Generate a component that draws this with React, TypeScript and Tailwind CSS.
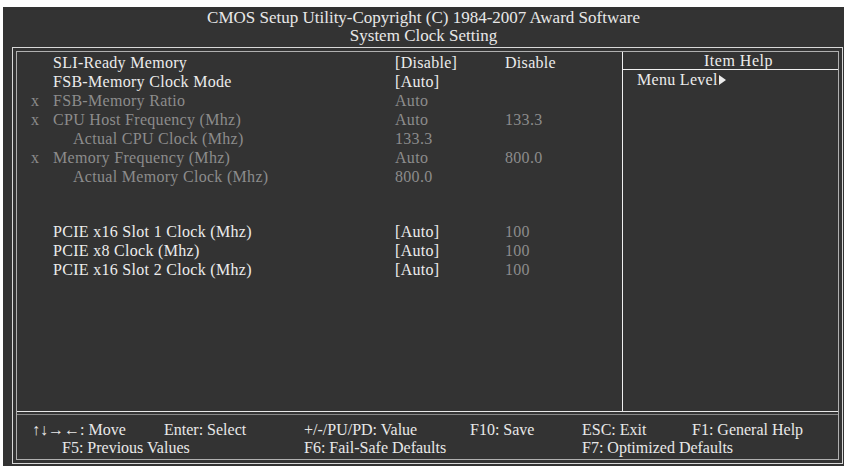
import React from 'react';

interface Row {
  mark?: boolean;
  indent?: boolean;
  label: string;
  value: string;
  extra?: string;
  dim?: boolean;
  extraDim?: boolean;
}

const rows: (Row | null)[] = [
  { label: 'SLI-Ready Memory', value: '[Disable]', extra: 'Disable' },
  { label: 'FSB-Memory Clock Mode', value: '[Auto]' },
  { mark: true, label: 'FSB-Memory Ratio', value: 'Auto', dim: true },
  { mark: true, label: 'CPU Host Frequency (Mhz)', value: 'Auto', extra: '133.3', dim: true, extraDim: true },
  { indent: true, label: 'Actual CPU Clock (Mhz)', value: '133.3', dim: true },
  { mark: true, label: 'Memory Frequency (Mhz)', value: 'Auto', extra: '800.0', dim: true, extraDim: true },
  { indent: true, label: 'Actual Memory Clock (Mhz)', value: '800.0', dim: true },
  null,
  null,
  { label: 'PCIE x16 Slot 1 Clock (Mhz)', value: '[Auto]', extra: '100', extraDim: true },
  { label: 'PCIE x8 Clock (Mhz)', value: '[Auto]', extra: '100', extraDim: true },
  { label: 'PCIE x16 Slot 2 Clock (Mhz)', value: '[Auto]', extra: '100', extraDim: true },
];

const serif = { fontFamily: '"Liberation Serif", "Times New Roman", serif' };

function SettingRow({ row }: { row: Row | null }) {
  // empty lines are a touch shorter than item lines
  if (!row) return <div className="h-[18px]" />;
  const tone = row.dim ? 'text-[#8c8c8c]' : 'text-[#ececec]';
  return (
    <div className="flex h-[19px] items-center text-[16px] tracking-[0.3px] whitespace-nowrap">
      <div className="w-[21px] pl-[14px] text-[#8c8c8c]">{row.mark ? 'x' : ''}</div>
      <div className={`w-[357px] ${row.indent ? 'pl-[35px]' : 'pl-[15px]'} ${tone}`}>{row.label}</div>
      <div className={`w-[110px] ${tone}`}>{row.value}</div>
      <div className={row.extraDim ? 'text-[#8c8c8c]' : 'text-[#ececec]'}>{row.extra}</div>
    </div>
  );
}

export default function App() {
  return (
    <div className="w-[845px] h-[466px] bg-white pt-[7px] pl-[3px] pr-[1px]" style={serif}>
      <div className="h-[459px] bg-[#333333] flex flex-col">
        {/* Title */}
        <div className="h-[40px] flex flex-col items-center justify-center text-[#e8e8e8] text-[17px] leading-[18px]">
          <div>CMOS Setup Utility-Copyright (C) 1984-2007 Award Software</div>
          <div>System Clock Setting</div>
        </div>

        {/* Double frame */}
        <div className="ml-[9px] mr-[1px] h-[417px] border border-[#d8d8d8] p-[3px]">
          <div className="h-full border border-[#b0b0b0] flex flex-col">
            <div className="flex h-[360px] border-b border-[#e8e8e8]">
              <div className="w-[605px] pt-[1px]">
                {rows.map((r, i) => (
                  <SettingRow key={i} row={r} />
                ))}
              </div>
              <div className="flex-1 border-l border-[#f0f0f0] flex flex-col">
                <div className="h-[18px] border-b border-[#f0f0f0] flex items-center justify-center pl-[16px] text-[16px] tracking-[0.5px] text-[#ececec]">
                  Item Help
                </div>
                <div className="flex items-center h-[20px] pl-[14px] text-[16px] tracking-[0.3px] text-[#ececec]">
                  Menu Level
                  <svg width="7" height="10" viewBox="0 0 7 10" className="ml-[1px]">
                    <path d="M0 0 L7 5 L0 10 Z" fill="#ececec" />
                  </svg>
                </div>
              </div>
            </div>
            <div className="border-t border-[#8a8a8a] mt-[2px]" />

            {/* Footer */}
            <div className="pt-[6px] text-[16px] leading-[18px] text-[#e8e8e8] whitespace-nowrap">
              <div className="flex">
                <div className="w-[147px] pl-[15px]">↑↓→←: Move</div>
                <div className="w-[140px]">Enter: Select</div>
                <div className="w-[166px]">+/-/PU/PD: Value</div>
                <div className="w-[112px]">F10: Save</div>
                <div className="w-[110px]">ESC: Exit</div>
                <div>F1: General Help</div>
              </div>
              <div className="flex">
                <div className="w-[287px] pl-[45px]">F5: Previous Values</div>
                <div className="w-[278px]">F6: Fail-Safe Defaults</div>
                <div>F7: Optimized Defaults</div>
              </div>
            </div>
          </div>
        </div>
      </div>
    </div>
  );
}
